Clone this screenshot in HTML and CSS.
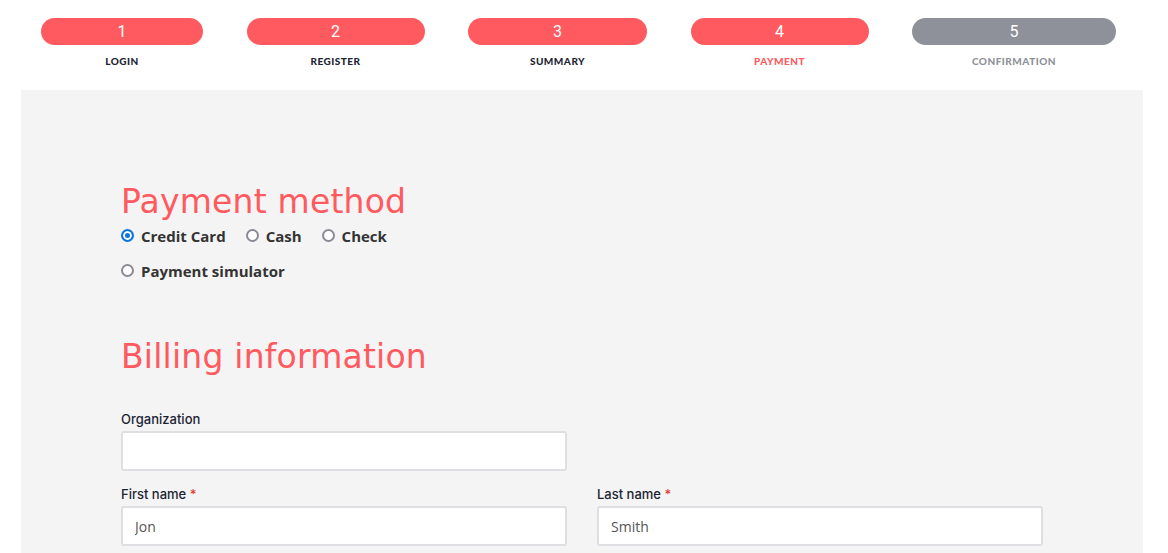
FILE: index.html
```html
<!DOCTYPE html>
<html lang="en">
<head>
    <meta charset="UTF-8">
    <meta name="viewport" content="width=device-width, initial-scale=1.0">
    <title>Checkout - Payment</title>
    <link rel="stylesheet" href="styles.css">
</head>
<body>
    <!-- steps -->
    <ol class="steps">
        <li class="step done">
            <span class="step-pill">1</span>
            <span class="step-label">Login</span>
        </li>
        <li class="step done">
            <span class="step-pill">2</span>
            <span class="step-label">Register</span>
        </li>
        <li class="step done">
            <span class="step-pill">3</span>
            <span class="step-label">Summary</span>
        </li>
        <li class="step current">
            <span class="step-pill">4</span>
            <span class="step-label">Payment</span>
        </li>
        <li class="step todo">
            <span class="step-pill">5</span>
            <span class="step-label">Confirmation</span>
        </li>
    </ol>

    <main class="panel">
        <h2 class="section-title">Payment method</h2>
        <div class="radio-group">
            <label class="radio"><input type="radio" name="method" checked> Credit Card</label>
            <label class="radio"><input type="radio" name="method"> Cash</label>
            <label class="radio"><input type="radio" name="method"> Check</label>
            <label class="radio"><input type="radio" name="method"> Payment simulator</label>
        </div>

        <h2 class="section-title billing-title">Billing information</h2>
        <form class="form-grid">
            <div class="field">
                <label class="field-label">Organization</label>
                <input class="field-input" type="text">
            </div>
            <div></div>
            <div class="field">
                <label class="field-label">First name <span class="req">*</span></label>
                <input class="field-input" type="text" value="Jon">
            </div>
            <div class="field">
                <label class="field-label">Last name <span class="req">*</span></label>
                <input class="field-input" type="text" value="Smith">
            </div>
        </form>
    </main>
</body>
</html>
```

FILE: styles.css
```css
* {
    margin: 0;
    padding: 0;
    box-sizing: border-box;
}

body {
    background-color: #fff;
    font-family: 'Open Sans', sans-serif;
    overflow: hidden;
}

/* steps */
.steps {
    list-style: none;
    display: grid;
    grid-template-columns: 162px 178px 179px 178px 204px;
    column-gap: 43.5px;
    padding: 18px 50px 0 41px;
    height: 90px;
}

.step {
    display: flex;
    flex-direction: column;
    align-items: center;
}

.step-pill {
    width: 100%;
    height: 27px;
    border-radius: 14px;
    background-color: #fe5a60;
    color: #fff;
    font-family: 'Roboto', sans-serif;
    font-size: 16px;
    line-height: 27px;
    text-align: center;
}

.step-label {
    margin-top: 10px;
    font-family: 'Lato', sans-serif;
    font-size: 10px;
    font-weight: 900;
    letter-spacing: 0.5px;
    text-transform: uppercase;
    color: #1c2433;
}

.current .step-label {
    color: #fe5a60;
}

.todo .step-pill {
    background-color: #8e9199;
}

.todo .step-label {
    color: #8e9199;
}

/* panel */
.panel {
    margin: 0 25px 0 21px;
    background-color: #f4f4f4;
    padding: 92px 100px 40px;
    min-height: 500px;
}

.section-title {
    font-family: 'DejaVu Sans', sans-serif;
    font-weight: normal;
    font-size: 33px;
    line-height: 40px;
    letter-spacing: 0.2px;
    color: #fe5a60;
}

.billing-title {
    margin-top: 49px;
}

.radio-group {
    display: flex;
    flex-wrap: wrap;
    max-width: 400px;
    column-gap: 20px;
    margin-top: -4px;
}

.radio {
    display: flex;
    align-items: center;
    gap: 7px;
    height: 35px;
    font-size: 15px;
    font-weight: bold;
    color: #333;
}

.radio input {
    appearance: none;
    width: 13px;
    height: 13px;
    margin: 0;
    border: 2px solid #8a8a94;
    border-radius: 50%;
    background: #fff;
}

.radio input:checked {
    border-color: #0b74e5;
    background: #0b74e5;
    box-shadow: inset 0 0 0 2px #fff;
}

/* form */
.form-grid {
    display: grid;
    grid-template-columns: 446px 446px;
    column-gap: 30px;
    row-gap: 15px;
    margin-top: 34px;
}

.field-label {
    display: block;
    font-family: 'Inter', sans-serif;
    font-size: 13px;
    font-weight: 500;
    color: #1c2433;
    margin-bottom: 4px;
}

.req {
    color: #e53935;
}

.field-input {
    display: block;
    width: 100%;
    height: 40px;
    border: 2px solid #dfdfe3;
    border-radius: 3px;
    background: #fff;
    padding: 0 12px;
    font-family: 'Open Sans', sans-serif;
    font-size: 14px;
    color: #555;
}
```
